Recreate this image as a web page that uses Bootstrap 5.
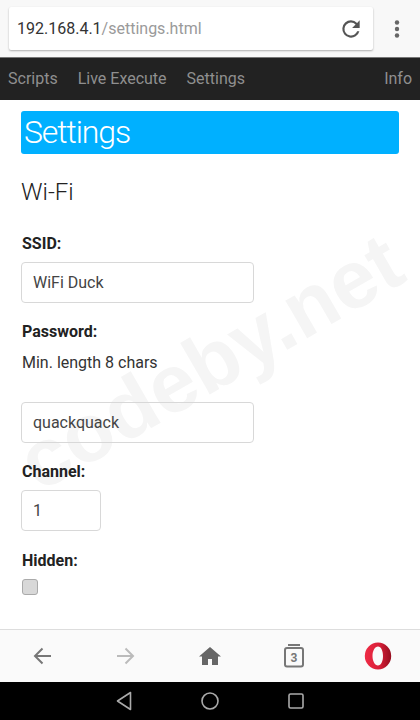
<!DOCTYPE html>
<html lang="en">
<head>
    <meta charset="UTF-8">
    <meta name="viewport" content="width=device-width, initial-scale=1.0">
    <title>Settings</title>
    <link href="https://cdn.jsdelivr.net/npm/bootstrap@5.3.0/dist/css/bootstrap.min.css" rel="stylesheet">
    <style>
        html, body { height: 100%; }
        body {
            font-family: Roboto, "Liberation Sans", sans-serif;
            color: #222;
            background: #fff;
            overflow: hidden;
        }
        .phone {
            height: 720px;
            position: relative;
        }
        .top-bar {
            height: 58px;
            background: #f8f8f8;
            border-bottom: 1px solid #777;
            padding: 7px 0 0 9px;
        }
        .url-box {
            width: 364px;
            height: 43px;
            background: #fff;
            border-radius: 2px;
            box-shadow: 0 1px 2px rgba(0, 0, 0, .3);
            padding: 0 9px 0 8px;
            font-size: 16px;
        }
        .url-path { color: #9a9a9a; }
        .url-host { color: #333; }
        .menu-btn { width: 47px; height: 43px; }
        .site-nav {
            height: 42px;
            background: #222;
            padding: 0 8px;
            font-size: 16px;
        }
        .site-nav a {
            color: #8f8f8f;
            text-decoration: none;
            margin-right: 20px;
        }
        .site-nav a:last-child { margin-right: 0; }
        .page-body {
            height: 529px;
            padding: 11px 21px 0;
        }
        .title-bar {
            background: #00b0ff;
            color: #fff;
            height: 43px;
            border-radius: 3px;
            font-size: 32px;
            font-weight: 300;
            letter-spacing: -1.1px;
            line-height: 42px;
            padding-left: 3px;
            margin: 0 0 20px;
        }
        .wifi-head {
            font-size: 24px;
            font-weight: 300;
            line-height: 36px;
            margin: 0 0 24px;
        }
        .field-label {
            display: block;
            font-size: 16px;
            font-weight: 700;
            color: #222;
            line-height: 20px;
            margin: 0 0 8px 1px;
        }
        .field-input {
            display: block;
            height: 41px;
            width: 233px;
            border: 1px solid #d8d8d8;
            border-radius: 4px;
            font-size: 16px;
            color: #444;
            padding: 0 11px;
            margin-bottom: 19px;
            background: #fff;
            box-shadow: none;
        }
        .field-input.num-input { width: 80px; margin-bottom: 20px; }
        .pass-label { margin-bottom: 11px; }
        .hint-text { font-size: 16px; line-height: 20px; margin: 0 0 29px 1px; color: #333; }
        .fake-check {
            display: block;
            width: 16px;
            height: 16px;
            margin: 1px 0 0 1px;
            background: #d8d8d8;
            border: 1px solid #aaa;
            border-radius: 3px;
        }
        .watermark {
            position: absolute;
            left: 210px;
            top: 362px;
            transform: translate(-50%, -50%) rotate(-30deg);
            font-family: "Liberation Sans", sans-serif;
            font-weight: 700;
            font-size: 82px;
            line-height: 1;
            color: #f5f5f5;
            white-space: nowrap;
            pointer-events: none;
        }
        .page-body > * { position: relative; z-index: 1; }
        .page-body > .field-input { background: transparent; }
        .bottom-bar {
            height: 53px;
            background: #fafafa;
            border-top: 1px solid #ddd;
            padding: 0 14px;
            position: relative;
            z-index: 1;
        }
        .android-bar {
            height: 38px;
            background: #000;
            gap: 69px;
            position: relative;
            z-index: 1;
        }
        .slot { width: 56px; }
    </style>
</head>
<body>
    <div class="phone d-flex flex-column">
        <div class="top-bar d-flex">
            <div class="url-box d-flex align-items-center justify-content-between">
                <span><span class="url-host">192.168.4.1</span><span class="url-path">/settings.html</span></span>
                <svg width="26" height="26" viewBox="0 0 24 24"><path fill="#555" d="M17.65 6.35A7.96 7.96 0 0 0 12 4a8 8 0 1 0 7.73 10h-2.08A6 6 0 1 1 12 6c1.66 0 3.14.69 4.22 1.78L13 11h7V4l-2.35 2.35z"/></svg>
            </div>
            <div class="menu-btn d-flex align-items-center justify-content-center">
                <svg width="6" height="20" viewBox="0 0 6 20"><circle cx="3" cy="3.5" r="2.2" fill="#666"/><circle cx="3" cy="10" r="2.2" fill="#666"/><circle cx="3" cy="16.5" r="2.2" fill="#666"/></svg>
            </div>
        </div>
        <nav class="site-nav d-flex align-items-center">
            <a href="#">Scripts</a>
            <a href="#">Live Execute</a>
            <a href="#">Settings</a>
            <a href="#" class="ms-auto">Info</a>
        </nav>
        <div class="page-body flex-grow-1">
            <h1 class="title-bar">Settings</h1>
            <h2 class="wifi-head">Wi-Fi</h2>
            <label class="field-label" for="ssid">SSID:</label>
            <input class="form-control field-input" id="ssid" type="text" value="WiFi Duck">
            <label class="field-label pass-label" for="pswd">Password:</label>
            <p class="hint-text">Min. length 8 chars</p>
            <input class="form-control field-input" id="pswd" type="text" value="quackquack">
            <label class="field-label" for="ch">Channel:</label>
            <input class="form-control field-input num-input" id="ch" type="text" value="1">
            <label class="field-label" for="hidden">Hidden:</label>
            <span class="fake-check" id="hidden"></span>
        </div>
        <div class="watermark">codeby.net</div>
        <div class="bottom-bar d-flex align-items-center justify-content-between">
            <div class="slot d-flex justify-content-center">
                <svg width="18" height="18" viewBox="0 0 18 18" fill="none" stroke="#777" stroke-width="2"><path d="M18 9H2M9.500 1.500 2 9l7.500 7.500"/></svg>
            </div>
            <div class="slot d-flex justify-content-center">
                <svg width="18" height="18" viewBox="0 0 18 18" fill="none" stroke="#bbb" stroke-width="2"><path d="M0 9h16M8.500 1.500 16 9l-7.500 7.500"/></svg>
            </div>
            <div class="slot d-flex justify-content-center">
                <svg width="22" height="18" viewBox="0 0 22 18"><path fill="#666" d="M11 0 0 9.500h3V18h6v-6h4v6h6V9.500h3z"/></svg>
            </div>
            <div class="slot d-flex justify-content-center">
                <svg width="20" height="24" viewBox="0 0 20 24"><path fill="#777" d="M4 0h12v2H4z"/><rect x="1" y="4" width="18" height="18.500" rx="2" fill="none" stroke="#777" stroke-width="2"/><text x="10" y="18" text-anchor="middle" font-family="Roboto" font-size="12" font-weight="700" fill="#777">3</text></svg>
            </div>
            <div class="slot d-flex justify-content-center">
                <svg width="28" height="28" viewBox="0 0 28 28">
                    <defs><linearGradient id="operaRed" x1="0" x2="1" y1="0" y2="0"><stop offset="0" stop-color="#ef2b45"/><stop offset=".55" stop-color="#d81f38"/><stop offset="1" stop-color="#950d1e"/></linearGradient></defs>
                    <path fill="url(#operaRed)" fill-rule="evenodd" d="M14 .500a13.200 13.500 0 1 0 0 27 13.200 13.500 0 0 0 0-27zM14 4.500c3 0 5 4.200 5 9.500s-2 9.500-5 9.500-5.500-4.200-5.500-9.500S11 4.500 14 4.500z"/>
                </svg>
            </div>
        </div>
        <div class="android-bar d-flex align-items-center justify-content-center">
            <svg width="16" height="20" viewBox="0 0 16 20" fill="none" stroke="#aaa" stroke-width="1.600"><path d="M14.500 1.500v17L1.500 10z" stroke-linejoin="round"/></svg>
            <svg width="18" height="18" viewBox="0 0 18 18" fill="none" stroke="#aaa" stroke-width="1.600"><circle cx="9" cy="9" r="8"/></svg>
            <svg width="16" height="16" viewBox="0 0 16 16" fill="none" stroke="#aaa" stroke-width="1.600"><rect x="1" y="1" width="14" height="14" rx="1.500"/></svg>
        </div>
    </div>
    <script src="https://cdn.jsdelivr.net/npm/bootstrap@5.3.0/dist/js/bootstrap.bundle.min.js"></script>
</body>
</html>
